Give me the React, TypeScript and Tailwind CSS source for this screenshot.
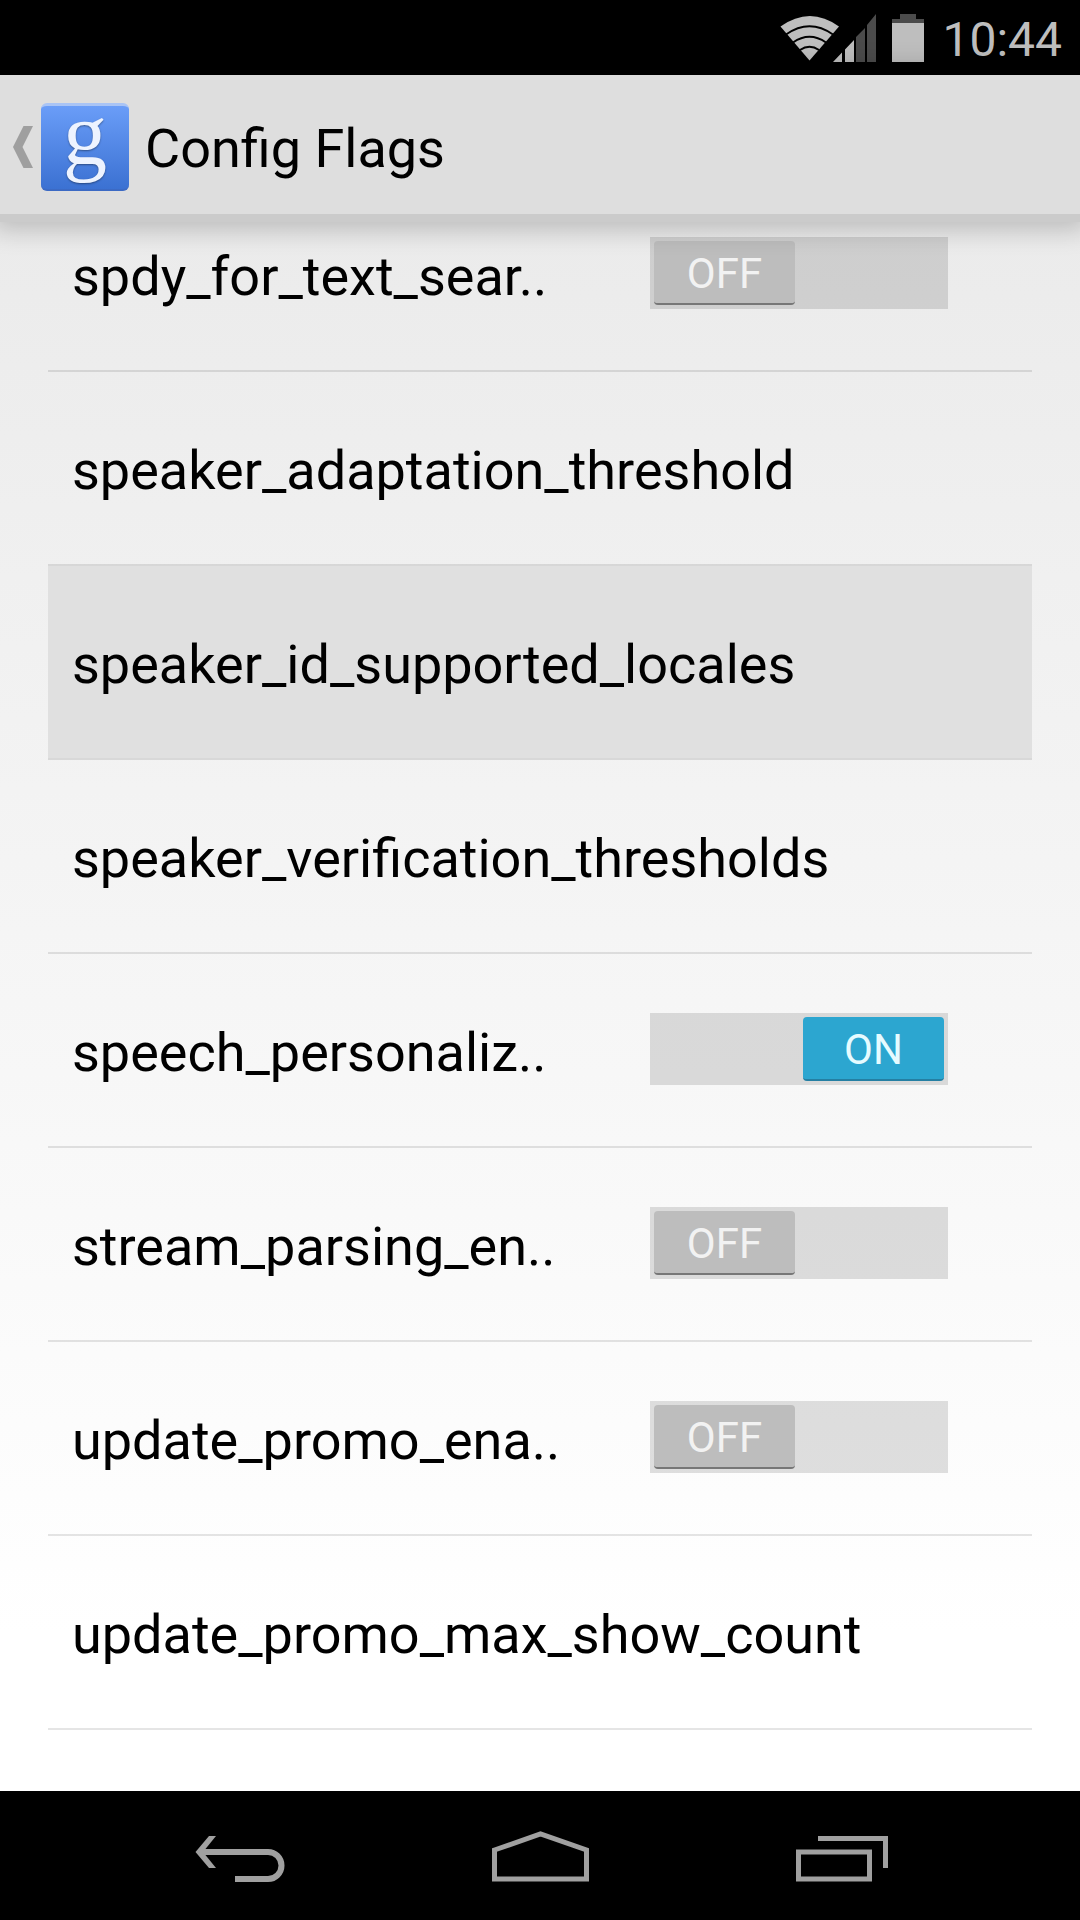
import { useState } from "react";

type Flag = { name: string; on?: boolean; pressed?: boolean };

const FLAGS: Flag[] = [
  { name: "spdy_for_text_sear..", on: false },
  { name: "speaker_adaptation_threshold" },
  { name: "speaker_id_supported_locales", pressed: true },
  { name: "speaker_verification_thresholds" },
  { name: "speech_personaliz..", on: true },
  { name: "stream_parsing_en..", on: false },
  { name: "update_promo_ena..", on: false },
  { name: "update_promo_max_show_count" },
];

function StatusBar() {
  return (
    <div className="flex h-[75px] shrink-0 items-center justify-end bg-black pr-[18px] text-[#bebebe]">
      <svg width="96" height="48" viewBox="0 0 96 48" aria-label="Wi-Fi and signal strength" role="img">
        <path d="M0.5 12.500Q30-8.500 59 12.500L29.500 46.500Z" fill="#bebebe" />
        <g fill="none" stroke="#000" strokeWidth="2">
          <path d="M6 20.500Q29.500 4 53 20.500" />
          <path d="M13 28.500Q29.500 17 46 28.500" />
          <path d="M20 36Q29.500 29.500 39 36" />
        </g>
        <path d="M53 48L62 38.500V48Z M65 35.500L74 26V48H65Z" fill="#bebebe" />
        <path d="M76 23L85 14V48H76Z M87 11L96 0V48H87Z" fill="#4b4b4b" />
      </svg>
      <svg className="ml-4" width="32" height="48" viewBox="0 0 32 48" aria-label="Battery" role="img">
        <path d="M8 0H24V5H32V9H0V5H8Z" fill="#4b4b4b" />
        <path d="M0 9H32V48H0Z" fill="#bebebe" />
      </svg>
      <time className="ml-[18px] pt-1 text-5xl leading-none">10:44</time>
    </div>
  );
}

function Header() {
  return (
    <header className="relative z-10 flex h-[147px] shrink-0 items-center border-b-8 border-[#cbcbcb] bg-[#dedede] pt-1 pl-3 shadow-[0_0_24px_8px_rgba(0,0,0,0.2)]">
      <button type="button" aria-label="Navigate up" className="flex items-center gap-2">
        <svg width="21" height="42" viewBox="0 0 21 42" aria-hidden="true">
          <path d="M11.500 0H21L10.500 21L21 42H11.500L1 21Z" fill="#9f9f9f" />
        </svg>
        <span className="flex h-[88px] w-[88px] items-center justify-center rounded-md border-t-3 border-b-2 border-t-[#a9c4f5] border-b-[#3c6ac4] bg-linear-to-b from-[#6a9df8] to-[#3b71d2] pb-6 font-['Liberation_Serif',serif] text-[88px] leading-none text-[#edf3ff] text-shadow-[0_1px_2px_rgba(0,0,0,0.4)]">
          g
        </span>
      </button>
      <h1 className="ml-4 pt-1 text-[54px] leading-none">Config Flags</h1>
    </header>
  );
}

function Switch({ id, initial }: { id: string; initial: boolean }) {
  const [on, setOn] = useState(initial);
  return (
    <span className="relative flex h-[72px] w-[298px] shrink-0">
      <input
        id={id}
        type="checkbox"
        role="switch"
        checked={on}
        onChange={() => setOn(!on)}
        className="absolute inset-0 h-full w-full cursor-pointer appearance-none bg-black/12"
      />
      <span
        className={
          on
            ? "pointer-events-none relative my-1 mr-1 ml-auto flex w-[141px] items-center justify-center rounded-sm border-b-2 border-[#247fa3] bg-[#2ca6d0] pt-1 text-[42px] leading-none text-[#e6fbff]"
            : "pointer-events-none relative my-1 mr-auto ml-1 flex w-[141px] items-center justify-center rounded-sm border-b-2 border-[#777777] bg-[#bdbdbd] pt-1 text-[42px] leading-none text-[#f2f2f2]"
        }
      >
        {on ? "ON" : "OFF"}
      </span>
    </span>
  );
}

function Row({ flag }: { flag: Flag }) {
  if (flag.on === undefined) {
    return (
      <li className={flag.pressed ? "border-b-2 border-[#d8d8d8] bg-[#e0e0e0]" : "border-b-2 border-black/10"}>
        <button type="button" className="flex h-48 w-full items-center px-6 pt-1.5 text-left text-[54px] leading-none">
          {flag.name}
        </button>
      </li>
    );
  }
  return (
    <li className="flex h-[194px] items-center justify-between border-b-2 border-black/10 pr-[84px] pb-0.5 pl-6">
      <label htmlFor={flag.name} className="pt-2 text-[54px] leading-none">
        {flag.name}
      </label>
      <Switch id={flag.name} initial={flag.on} />
    </li>
  );
}

function NavBar() {
  return (
    <nav className="grid h-[129px] shrink-0 grid-cols-3 bg-black px-[90px] pt-0.5">
      <button type="button" aria-label="Back" className="flex items-center justify-center">
        <svg width="90" height="52" viewBox="0 0 90 52" fill="none" stroke="#a0a0a0" strokeWidth="6" aria-hidden="true">
          <path d="M6 21H73A13.500 13.500 0 0 1 73 48H40" />
          <path d="M14 5H21L8 21L21 37H14L0.500 21Z" fill="#a0a0a0" stroke="none" />
        </svg>
      </button>
      <button type="button" aria-label="Home" className="flex items-center justify-center">
        <svg width="97" height="52" viewBox="0 0 97 52" fill="none" stroke="#a0a0a0" strokeWidth="5" aria-hidden="true">
          <path d="M2.500 19L48.500 3L94.500 19V48H2.500Z" />
        </svg>
      </button>
      <button type="button" aria-label="Recent apps" className="flex items-center justify-center pl-1">
        <svg width="92" height="52" viewBox="0 0 92 52" fill="none" stroke="#a0a0a0" strokeWidth="5" aria-hidden="true">
          <path d="M2.500 21H73.500V48H2.500Z" />
          <path d="M22 7.500H89.500V37" />
        </svg>
      </button>
    </nav>
  );
}

export default function App() {
  return (
    <div className="flex h-screen flex-col overflow-hidden bg-black font-[Roboto,sans-serif] text-black">
      <StatusBar />
      <Header />
      <main className="flex min-h-0 flex-1 flex-col justify-end bg-linear-to-b from-[#ebebeb] to-white to-90% px-12 pb-[61px]">
        <ul>
          {FLAGS.map((flag) => (
            <Row key={flag.name} flag={flag} />
          ))}
        </ul>
      </main>
      <NavBar />
    </div>
  );
}
